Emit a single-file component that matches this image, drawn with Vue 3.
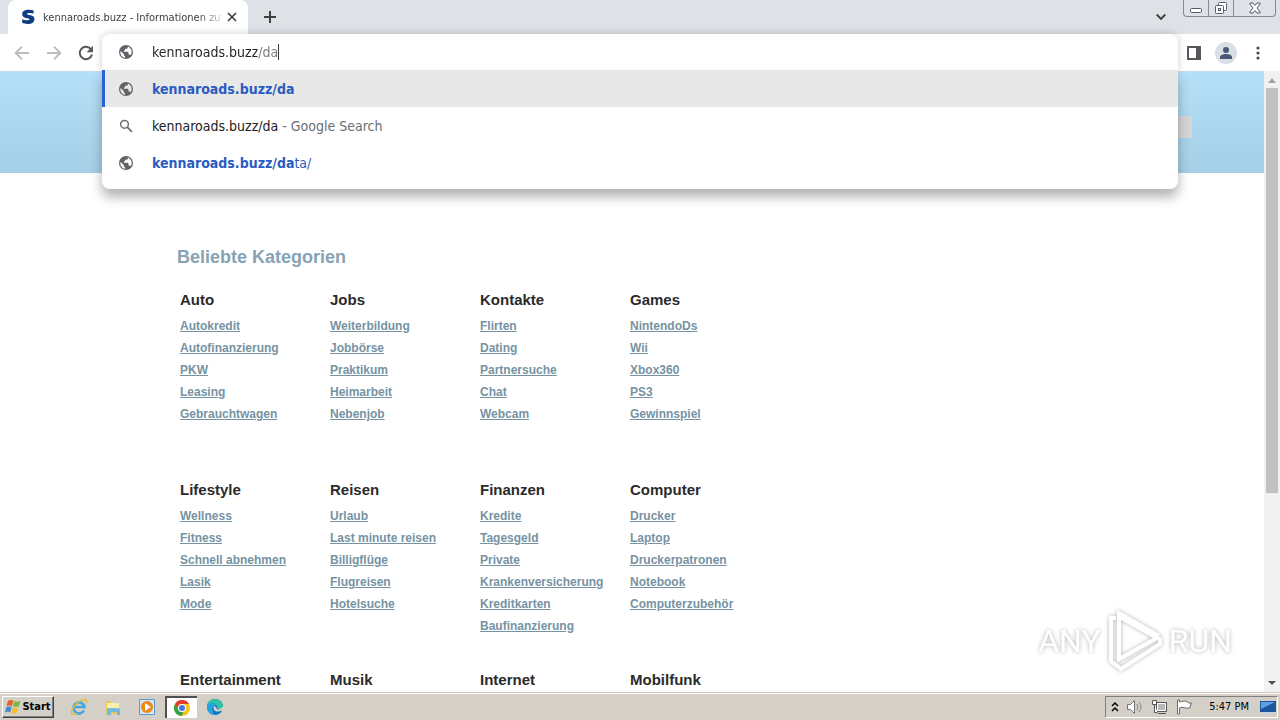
<script setup>
  import {ref} from "vue";

  const url = ref("kennaroads.buzz/da");

  const suggestions = [
    { id: 1, icon: "globe", bold: "kennaroads.buzz/da", rest: "", active: true },
    { id: 2, icon: "search", query: "kennaroads.buzz/da", hint: " - Google Search" },
    { id: 3, icon: "globe", bold: "kennaroads.buzz/da", rest: "ta/" }
  ];

  const categories = [
    { name: "Auto", links: ["Autokredit", "Autofinanzierung", "PKW", "Leasing", "Gebrauchtwagen"] },
    { name: "Jobs", links: ["Weiterbildung", "Jobbörse", "Praktikum", "Heimarbeit", "Nebenjob"] },
    { name: "Kontakte", links: ["Flirten", "Dating", "Partnersuche", "Chat", "Webcam"] },
    { name: "Games", links: ["NintendoDs", "Wii", "Xbox360", "PS3", "Gewinnspiel"] },
    { name: "Lifestyle", links: ["Wellness", "Fitness", "Schnell abnehmen", "Lasik", "Mode"] },
    { name: "Reisen", links: ["Urlaub", "Last minute reisen", "Billigflüge", "Flugreisen", "Hotelsuche"] },
    { name: "Finanzen", links: ["Kredite", "Tagesgeld", "Private", "Krankenversicherung", "Kreditkarten", "Baufinanzierung"] },
    { name: "Computer", links: ["Drucker", "Laptop", "Druckerpatronen", "Notebook", "Computerzubehör"] },
    { name: "Entertainment", links: [] },
    { name: "Musik", links: [] },
    { name: "Internet", links: [] },
    { name: "Mobilfunk", links: [] }
  ];
</script>

<template>
  <div class="screen">
    <header class="tabs">
      <div class="tab">
        <svg class="favicon" viewBox="0 0 16 16"><path d="M13.6 4.600V1.400C9 .2 2.200.3 2.200 5.200c0 4.700 7.300 3.300 7.300 5 0 1.500-4.500 1.200-7.300 0v3.900c5 1.600 12.300 1.200 12.300-4.200 0-4.700-7.500-3.500-7.500-4.900 0-1.400 4-1.300 6.600-.4z" fill="#0f3c82" /></svg>
        <span class="tab-title">kennaroads.buzz - Informationen zu</span>
        <button class="tab-close" aria-label="Close tab">
          <svg width="10" height="10" viewBox="0 0 10 10"><path d="M1 1l8 8M9 1L1 9" stroke="#3c4043" stroke-width="1.700" /></svg>
        </button>
      </div>
      <button class="new-tab" aria-label="New tab">
        <svg width="12" height="12" viewBox="0 0 12 12"><path d="M6 0v12M0 6h12" stroke="#3c4043" stroke-width="2" /></svg>
      </button>
      <button class="tab-search" aria-label="Search tabs">
        <svg width="10" height="8" viewBox="0 0 10 8"><path d="M.7 1.500L5 5.800l4.300-4.300" fill="none" stroke="#3c4043" stroke-width="1.900" /></svg>
      </button>
      <div class="window-buttons">
        <button aria-label="Minimize">
          <svg width="14" height="14" viewBox="0 0 14 14"><rect x="1.500" y="7.500" width="11" height="4" rx="1" fill="#fff" stroke="#555c68" /></svg>
        </button>
        <button aria-label="Restore">
          <svg width="14" height="14" viewBox="0 0 14 14" fill="#fff" stroke="#555c68"><rect x="4.500" y="1.500" width="8" height="8" rx="1" /><rect x="1.500" y="4.500" width="8" height="8" rx="1" /><rect x="4.500" y="7.500" width="2" height="2" /></svg>
        </button>
        <button class="wide" aria-label="Close">
          <svg width="14" height="14" viewBox="0 0 14 14"><path d="M2 2h3l2 2.500L9 2h3v1L9 7l3 4v1H9L7 9.500 5 12H2v-1l3-4-3-4z" fill="#fff" stroke="#555c68" /></svg>
        </button>
      </div>
    </header>

    <div class="toolbar">
      <nav class="nav">
        <button aria-label="Back">
          <svg width="16" height="16" viewBox="0 0 16 16"><path d="M15 8H2M8 1.700L1.700 8 8 14.300" fill="none" stroke="#babcbe" stroke-width="1.900" /></svg>
        </button>
        <button aria-label="Forward">
          <svg width="16" height="16" viewBox="0 0 16 16"><path d="M1 8h13M8 1.700L14.300 8 8 14.300" fill="none" stroke="#babcbe" stroke-width="1.900" /></svg>
        </button>
        <button aria-label="Reload">
          <svg width="16" height="16" viewBox="0 0 16 16"><path d="M13.200 4.600A6.200 6.200 0 1 0 14 9.600" fill="none" stroke="#55585c" stroke-width="2" /><path d="M15 .8v6.400H8.600z" fill="#55585c" /></svg>
        </button>
      </nav>

      <div class="omnibox">
        <div class="row address">
          <svg class="icon" viewBox="0 0 16 16"><circle cx="8" cy="8" r="7" fill="#5f6368" /><path d="M2.500 7l3.300 3.100v1.200l1.300 1.300v1.300C3.800 13.400 1.700 10.300 2.500 7zM9.800 2.600v.8c0 .7-.6 1.300-1.300 1.300H7.100V6L5.800 6.700v1h4l.7.7v2h.8c.6 0 1.100.4 1.300.9 1.700-2 1.900-6.700-2.800-8.700z" fill="#fff" /></svg>
          <input v-model="url" class="url" aria-label="Address" size="18" spellcheck="false" />
          <span class="caret"></span>
        </div>
        <ul class="suggestions">
          <li v-for="item in suggestions" :key="item.id" class="row" :class="{active: item.active}">
            <svg v-if="item.icon == 'globe'" class="icon" viewBox="0 0 16 16"><circle cx="8" cy="8" r="7" fill="#5f6368" /><path class="land" d="M2.500 7l3.300 3.100v1.200l1.300 1.300v1.300C3.800 13.400 1.700 10.300 2.500 7zM9.800 2.600v.8c0 .7-.6 1.300-1.300 1.300H7.100V6L5.800 6.700v1h4l.7.7v2h.8c.6 0 1.100.4 1.300.9 1.700-2 1.900-6.700-2.800-8.700z" fill="#fff" /></svg>
            <svg v-else class="icon" viewBox="0 0 16 16"><circle cx="6.500" cy="6.300" r="3.900" fill="none" stroke="#6b6f73" stroke-width="1.500" /><path d="M9.300 9.100l4.600 4.700" stroke="#6b6f73" stroke-width="1.700" /></svg>
            <span v-if="item.query" class="query">{{ item.query }}<span class="hint">{{ item.hint }}</span></span>
            <a v-else href="#" class="match"><b>{{ item.bold }}</b>{{ item.rest }}</a>
          </li>
        </ul>
      </div>

      <div class="actions">
        <button aria-label="Side panel">
          <svg width="14" height="14" viewBox="0 0 14 14"><path d="M1 1h12v12H1z" fill="none" stroke="#55585c" stroke-width="2" /><path d="M9 1h5v12H9z" fill="#55585c" /></svg>
        </button>
        <button aria-label="Profile">
          <svg width="22" height="22" viewBox="0 0 22 22"><circle cx="11" cy="11" r="11" fill="#dadfe5" /><circle cx="11" cy="8" r="3" fill="#4a5878" /><path d="M5 17v-2c0-4 12-4 12 0v2z" fill="#4a5878" /></svg>
        </button>
        <button class="more" aria-label="Menu">
          <svg width="4" height="14" viewBox="0 0 4 14" fill="#45484c"><circle cx="2" cy="2" r="1.600" /><circle cx="2" cy="7" r="1.600" /><circle cx="2" cy="12" r="1.600" /></svg>
        </button>
      </div>
    </div>

    <div class="viewport">
      <main>
        <div class="banner"><button class="search-button" aria-label="Suche"></button></div>
        <div class="content">
          <h1>Beliebte Kategorien</h1>
          <div class="categories">
            <section v-for="category in categories" :key="category.name">
              <h2>{{ category.name }}</h2>
              <ul>
                <li v-for="link in category.links" :key="link"><a href="#">{{ link }}</a></li>
              </ul>
            </section>
          </div>
        </div>
      </main>
      <div class="scrollbar">
        <svg width="16" height="17" viewBox="0 0 16 17"><path d="M4 12h8L8 7z" fill="#a3a3a3" /></svg>
        <div class="track"><div class="thumb"></div></div>
        <svg width="16" height="17" viewBox="0 0 16 17"><path d="M4 6h8l-4 4z" fill="#505050" /></svg>
      </div>
      <div class="watermark">
        <span>ANY</span>
        <svg width="60" height="66" viewBox="0 0 60 66" fill="none" stroke="#fff" stroke-width="4"><path d="M14 51V5l40 23" /><path d="M14 13v38l38-21-37-21" /><path d="M11 10H6v43l10 8 39-25v-6" /></svg>
        <span>RUN</span>
      </div>
    </div>

    <footer class="taskbar">
      <button class="start">
        <svg width="17" height="16" viewBox="0 0 17 16"><path d="M3 2c2-1.500 3.500-1.300 5.500-.4L7 7C5 6 3.500 6.300 1.500 7.300z" fill="#e8622c" /><path d="M9.500 2c2 1 4 .8 6-.3L14 7c-2 1.200-4 1.200-6 .3z" fill="#79b943" /><path d="M1.200 8.400c2-1 3.600-1.200 5.500-.2L5.200 13.400c-2-.9-3.500-.8-5.200.2z" fill="#4389d0" /><path d="M7.700 8.500c2 1 4 .8 6-.2l-1.500 5.300c-2 1.100-4 1.100-6 .2z" fill="#f5bd32" /></svg>
        Start
      </button>
      <div class="pinned">
        <button aria-label="Internet Explorer">
          <svg width="18" height="18" viewBox="0 0 18 18" fill="none"><path d="M14 12.500A5.500 5.500 0 1 1 14.500 9H4" stroke="#41a8df" stroke-width="2.700" /><path d="M2 16C-.5 12 9 1 15.500 1.600c2 .2 1.300 2.400.7 3.600M2 16c1.200 1 3.400.2 5-.7" stroke="#e8ba3c" stroke-width="1.400" /></svg>
        </button>
        <button aria-label="Explorer">
          <svg width="18" height="18" viewBox="0 0 18 18"><path d="M2 3h5l1 2h7v11H2z" fill="#e5c65c" /><path d="M3 5h12v5H3z" fill="#fbefaf" /><path d="M4 10h11v2H4z" fill="#7bc6df" /><path d="M3 11h13v6h-3v-3H7v3H3z" fill="#74b9d9" /></svg>
        </button>
        <button aria-label="Media Player">
          <svg width="18" height="18" viewBox="0 0 18 18"><path d="M1.500 1.500h15v15h-15z" fill="#d6e7f3" stroke="#599bcc" /><circle cx="9" cy="9" r="6" fill="#ef8619" /><path d="M7 5l6 4-6 4z" fill="#fff" /></svg>
        </button>
        <button class="pressed" aria-label="Chrome">
          <svg width="16" height="16" viewBox="0 0 16 16"><circle cx="8" cy="8" r="8" fill="#fbc116" /><path d="M1 4a8 8 0 0 1 14 0H8a4 4 0 0 0-3.500 6z" fill="#e33b2e" /><path d="M1 4l3.500 6A4 4 0 0 0 9.500 12L7.500 16A8 8 0 0 1 1 4z" fill="#2da14c" /><circle cx="8" cy="8" r="4" fill="#fff" /><circle cx="8" cy="8" r="3" fill="#3d78e3" /></svg>
        </button>
        <button aria-label="Edge">
          <svg width="18" height="18" viewBox="0 0 18 18"><circle cx="9" cy="9" r="8" fill="#1274bd" /><path d="M1 8C2 3 5 1 9 1c5 0 8 3.500 8 7 0 3-3 4-6 3 1-1.500.5-4-2.500-4.600C5 5.500 2 6 1 8z" fill="#35c1a3" /><path d="M1 8c2-5 9-4 9-.5C6 7 5 13 9 16.900 3 17 .5 12 1 8z" fill="#22a4df" /><path d="M8 8c-2 5 3 7 8 4.500l1 .5 1-5-5 3.500c-2.500 0-3-1-2.500-2z" fill="#d4d0c8" /></svg>
        </button>
      </div>
      <div class="tray">
        <svg width="8" height="12" viewBox="0 0 8 12"><path d="M1 5l3-3 3 3M1 10l3-3 3 3" fill="none" stroke="#000" stroke-width="1.500" /></svg>
        <svg width="18" height="16" viewBox="0 0 18 16"><path d="M1.500 5.500h3l4-4v13l-4-4h-3z" fill="#fff" stroke="#737373" /><path d="M11 5q2 3 0 6M13 3q4 5 0 10" fill="none" stroke="#858585" /></svg>
        <svg width="18" height="16" viewBox="0 0 18 16"><path d="M5.500 3.500h10v9h-10z" fill="#b8b8b8" stroke="#555" /><path d="M6.500 4.500h8v7h-8z" fill="none" stroke="#fff" /><path d="M7 14.500h8M1.500 1.500h4v4h-4zM3.500 5.500v8h3" fill="#fff" stroke="#555" /></svg>
        <svg width="18" height="16" viewBox="0 0 18 16"><path d="M1.500 1v14h2V9c4-2 5 1 10 0l2-5c-4 1-3-2-7-2-2 0-4 1-5 1V1z" fill="#fff" stroke="#686868" /></svg>
        <time>5:47 PM</time>
        <svg width="16" height="14" viewBox="0 0 16 14"><path d="M0 1h16v11H0z" fill="#1d559f" /><path d="M1 2h14L1 9z" fill="#5da2e0" /><path d="M2 12h12v1H2z" fill="#bfdaf0" /></svg>
      </div>
    </footer>
  </div>
</template>

<style>
  body
  {
    overflow: hidden;
  }
</style>

<style scoped>
  *
  {
    box-sizing: border-box;
  }

  .screen
  {
    height: 100vh;
    display: flex;
    flex-direction: column;
    background-color: white;
    font-family: "DejaVu Sans Condensed", "Noto Sans", sans-serif;
  }

  button
  {
    display: flex;
    align-items: center;
    justify-content: center;
    border: 0px;
    padding: 0px;
    background-color: transparent;
    font-family: inherit;
  }

  svg
  {
    flex: none;
  }

  ul
  {
    list-style: none;
    margin: 0px;
    padding: 0px;
  }

  .tabs
  {
    display: flex;
    height: 34px;
    padding: 0px 4px 0px 8px;
    background-color: #dee1e6;
  }

  .tab
  {
    display: flex;
    align-items: center;
    width: 240px;
    padding: 0px 10px 0px 12px;
    border-radius: 8px 8px 0px 0px;
    background-color: white;
  }

  .favicon
  {
    width: 16px;
    height: 16px;
    margin-right: 7px;
  }

  .tab-title
  {
    flex: 1;
    white-space: nowrap;
    font-size: 11px;
    color: #3c4043;
    mask-image: linear-gradient(to right, black 154px, transparent 184px);
  }

  .tab-close
  {
    width: 12px;
    margin-left: 4px;
  }

  .new-tab
  {
    width: 44px;
  }

  .tab-search
  {
    width: 44px;
    margin-left: auto;
  }

  .window-buttons
  {
    display: flex;
    height: 17px;
    border: 1px solid #858b96;
    border-top: 0px;
    border-radius: 0px 0px 4px 4px;
  }

  .window-buttons button
  {
    width: 25px;
    border-right: 1px solid #858b96;
  }

  .window-buttons .wide
  {
    width: 41px;
    border-right: 0px;
  }

  .toolbar
  {
    display: flex;
    height: 37px;
  }

  .nav
  {
    display: flex;
    width: 102px;
    padding: 0px 8px 0px 14px;
    justify-content: space-between;
  }

  .omnibox
  {
    flex: 1;
    position: relative;
    z-index: 5;
    border-radius: 8px 8px 0px 0px;
    background-color: white;
    box-shadow: 0px 0px 8px rgba(0, 0, 0, 0.2);
  }

  .row
  {
    display: flex;
    align-items: center;
    height: 37px;
    padding-left: 16px;
    font-size: 14px;
  }

  .address
  {
    height: 36px;
  }

  .icon
  {
    width: 16px;
    height: 16px;
    margin-right: 18px;
  }

  .url
  {
    field-sizing: content;
    padding: 0px;
    border: 0px;
    outline: 0px;
    font-family: inherit;
    font-size: 14px;
    color: transparent;
    background-image: linear-gradient(to right, #202124 105px, #75787c 105px);
    background-clip: text;
  }

  .caret
  {
    width: 1px;
    height: 16px;
    background-color: #3c4043;
  }

  .suggestions
  {
    position: absolute;
    top: 36px;
    left: 0px;
    right: 0px;
    padding-bottom: 8px;
    border-radius: 0px 0px 8px 8px;
    background-color: white;
    box-shadow: 0px 8px 12px rgba(0, 0, 0, 0.3);
  }

  .active
  {
    background-color: #e8e8e8;
    box-shadow: inset 3px 0px #2a63d4;
  }

  .active .land
  {
    fill: #e8e8e8;
  }

  .match
  {
    color: #2a5bc0;
    text-decoration: none;
  }

  .query
  {
    color: #202124;
    white-space: pre;
  }

  .hint
  {
    color: #6b6f73;
  }

  .actions
  {
    display: flex;
    align-items: center;
    width: 102px;
    padding-left: 9px;
    gap: 14px;
  }

  .more
  {
    margin-left: 5px;
  }

  .viewport
  {
    flex: 1;
    min-height: 0px;
    display: flex;
    position: relative;
    font-family: "Liberation Sans", Arial, sans-serif;
  }

  main
  {
    flex: 1;
    overflow: hidden;
  }

  .banner
  {
    display: flex;
    align-items: center;
    justify-content: flex-end;
    height: 102px;
    padding: 9px 72px 0px 0px;
    border-top: 1px solid #c9dce7;
    background-image: linear-gradient(#b5e0f7, #a5cee7);
  }

  .search-button
  {
    width: 80px;
    height: 22px;
    background-color: #d6d6d6;
  }

  .content
  {
    max-width: 910px;
    margin: auto;
    padding-top: 73px;
  }

  h1
  {
    margin: 0px 0px 17px;
    font-size: 18px;
    line-height: 22px;
    color: #87a3b4;
  }

  .categories
  {
    display: grid;
    grid-template-columns: repeat(4, 150px);
    grid-auto-rows: 190px;
    padding-left: 3px;
  }

  h2
  {
    margin: 0px;
    font-size: 15px;
    line-height: 30px;
    color: #2b2b2b;
  }

  section li
  {
    font-size: 12px;
    font-weight: bold;
    line-height: 22px;
  }

  section a
  {
    color: #7693a3;
  }

  .scrollbar
  {
    display: flex;
    flex-direction: column;
    width: 16px;
    background-color: #f1f1f1;
  }

  .track
  {
    flex: 1;
    padding: 0px 2px;
  }

  .thumb
  {
    height: 69%;
    background-color: #c1c1c1;
  }

  .watermark
  {
    position: absolute;
    right: 48px;
    bottom: 18px;
    display: flex;
    align-items: center;
    gap: 4px;
    font-family: Roboto, sans-serif;
    font-size: 32px;
    color: white;
    filter: drop-shadow(0px 0px 2px rgba(0, 0, 0, 0.3));
  }

  .taskbar
  {
    display: flex;
    align-items: center;
    height: 28px;
    padding: 0px 2px;
    border-top: 1px solid #c9c5bd;
    box-shadow: inset 0px 1px white;
    background-color: #d4d0c8;
  }

  .start
  {
    width: 52px;
    height: 22px;
    border-top: 1px solid white;
    border-left: 1px solid white;
    border-right: 1px solid #404040;
    border-bottom: 1px solid #404040;
    box-shadow: inset -1px -1px #808080;
    font-size: 11px;
    font-weight: bold;
    color: black;
  }

  .pinned
  {
    display: flex;
    gap: 2px;
    margin-left: 9px;
  }

  .pinned button
  {
    width: 32px;
    height: 22px;
  }

  .pinned .pressed
  {
    border-top: 2px solid #505050;
    border-left: 2px solid #505050;
    background-color: white;
  }

  .tray
  {
    display: flex;
    align-items: center;
    height: 22px;
    gap: 7px;
    margin-left: auto;
    padding: 0px 1px 0px 5px;
    border: 1px solid white;
    border-top-color: #808080;
    border-left-color: #808080;
  }

  time
  {
    margin: 0px 4px 0px 8px;
    font-size: 11px;
  }
</style>
